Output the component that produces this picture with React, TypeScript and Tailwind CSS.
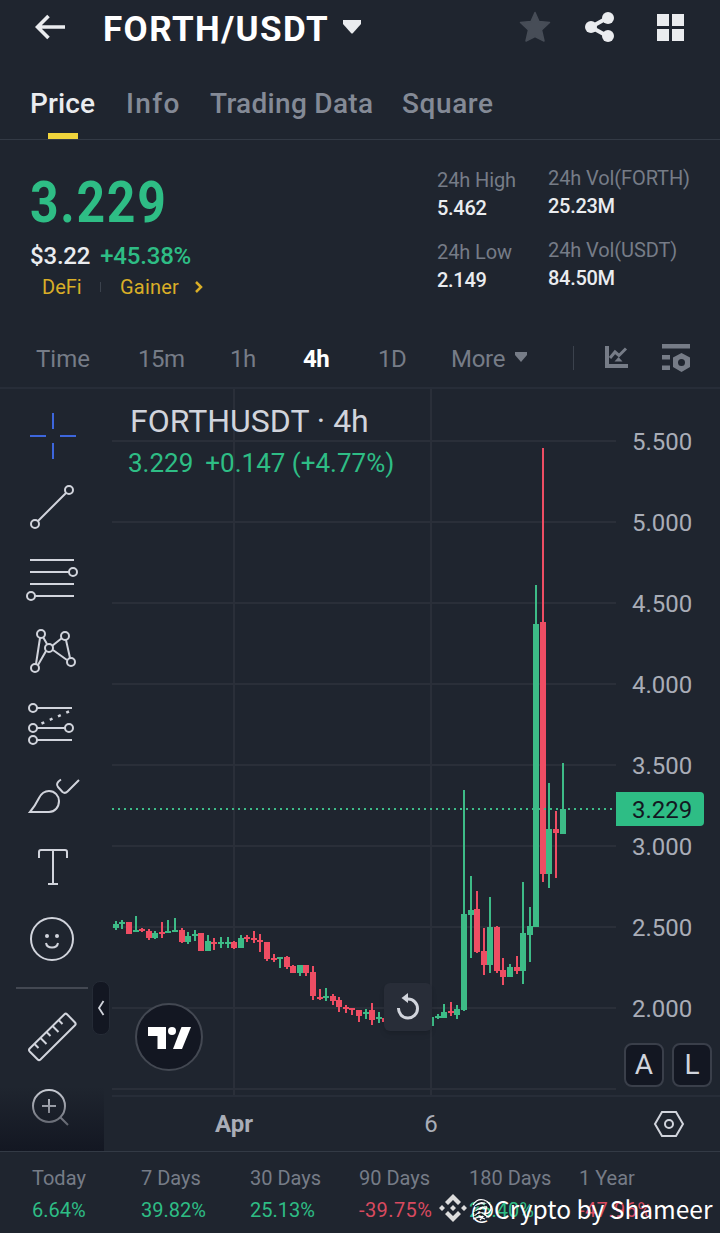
import type { ReactNode } from 'react';

type Candle = [x: number, high: number, top: number, bottom: number, low: number, up: 0 | 1];

// pixel positions inside the plot, shifted by the pane origin when drawn
const candles: Candle[] = [
  [116, 921, 924, 928, 930, 1], [122, 920, 922, 924, 929, 1], [129, 922, 922, 934, 934, 0],
  [136, 916, 930, 932, 932, 1], [142, 928, 929, 931, 932, 0], [149, 929, 931, 938, 940, 0],
  [155, 931, 933, 938, 939, 1], [162, 922, 932, 934, 938, 0], [168, 920, 931, 933, 933, 1],
  [175, 918, 930, 932, 932, 1], [182, 928, 930, 942, 943, 0], [188, 932, 936, 942, 944, 1],
  [195, 930, 934, 936, 941, 1], [201, 933, 933, 951, 951, 0], [208, 935, 941, 951, 951, 1],
  [214, 938, 942, 944, 950, 0], [221, 937, 942, 944, 948, 1], [228, 937, 942, 944, 948, 1],
  [234, 941, 942, 948, 949, 0], [241, 935, 938, 948, 948, 1], [247, 935, 937, 939, 942, 0],
  [254, 931, 938, 940, 943, 0], [260, 934, 940, 942, 952, 0], [267, 942, 942, 959, 961, 0],
  [274, 954, 958, 960, 962, 0], [280, 957, 957, 959, 968, 1], [287, 956, 957, 967, 969, 0],
  [293, 965, 966, 973, 973, 0], [300, 965, 965, 973, 976, 1], [306, 965, 965, 973, 976, 0],
  [313, 966, 972, 996, 1000, 0], [320, 989, 997, 999, 1000, 0], [326, 988, 996, 998, 1001, 1],
  [333, 994, 996, 1001, 1005, 0], [339, 997, 1000, 1007, 1012, 0], [346, 1005, 1007, 1009, 1013, 0],
  [352, 1008, 1008, 1010, 1015, 0], [359, 1010, 1010, 1016, 1022, 0], [366, 1009, 1012, 1014, 1019, 1],
  [372, 1003, 1010, 1020, 1025, 0], [379, 1012, 1017, 1019, 1023, 1], [385, 1018, 1018, 1022, 1022, 0],
  [431, 1014, 1017, 1026, 1026, 1], [438, 1014, 1016, 1018, 1019, 1], [444, 1004, 1012, 1018, 1018, 1],
  [451, 1002, 1011, 1013, 1016, 0], [457, 1005, 1009, 1015, 1019, 1], [464, 790, 914, 1010, 1011, 1],
  [471, 876, 910, 915, 958, 1], [477, 891, 909, 952, 953, 0], [484, 928, 951, 965, 975, 0],
  [490, 897, 927, 965, 973, 1], [497, 926, 927, 971, 973, 0], [503, 958, 970, 977, 985, 0],
  [510, 964, 967, 977, 977, 1], [517, 956, 967, 971, 974, 0], [523, 882, 933, 971, 984, 1],
  [530, 907, 926, 935, 962, 1], [536, 585, 624, 927, 927, 1], [543, 448, 622, 874, 882, 0],
  [549, 783, 829, 874, 888, 1], [556, 811, 829, 833, 878, 0], [563, 763, 809, 834, 834, 1],
];

const gridRows = [441, 522, 603, 684, 765, 846, 927, 1008, 1089];
const prices = ['5.500', '5.000', '4.500', '4.000', '3.500', '3.000', '2.500', '2.000'];

const returns = [
  { label: 'Today', value: '6.64%', up: true },
  { label: '7 Days', value: '39.82%', up: true },
  { label: '30 Days', value: '25.13%', up: true },
  { label: '90 Days', value: '-39.75%', up: false },
  { label: '180 Days', value: '25.40%', up: true },
  { label: '1 Year', value: '-47.96%', up: false },
];

function Header() {
  return (
    <header className="flex h-14 items-center pl-[35px]">
      <svg className="h-8 w-[31px]" viewBox="0 0 31 32" fill="none" stroke="#eaecef" strokeWidth="3.6">
        <path d="M30 15H3M13.500 4L2.500 15L13.500 26" />
      </svg>
      <h1 className="ml-[37px] w-[239px] pt-[2px] text-[35px] font-bold leading-none tracking-[1.4px] text-white">FORTH/USDT</h1>
      <svg className="mb-[3px] h-[14px] w-5" viewBox="0 0 20 14" fill="#eaecef">
        <path d="M1 0H19V4L11 13Q10 14 9 13L1 4Z" />
      </svg>
      <svg className="mb-[2px] ml-[157px] h-8 w-8" viewBox="0 0 32 32" fill="#474d57" stroke="#474d57" strokeWidth="1.500" strokeLinejoin="round">
        <path d="M16 1.500L20 10.500L30.500 11.500L22.500 19L25 30L16 25.500L7 30L9.500 19L1.500 11.500L12 10.500Z" />
      </svg>
      <svg className="mb-[2px] ml-[33px] h-8 w-8" viewBox="0 0 32 32" fill="#eaecef">
        <path d="M24 6.500L7 16L24 25.500" fill="none" stroke="#eaecef" strokeWidth="4" />
        <circle cx="24" cy="7" r="6" />
        <circle cx="7" cy="16" r="6" />
        <circle cx="24" cy="25" r="6" />
      </svg>
      <div className="mb-[2px] ml-[41px] grid grid-cols-2 gap-[3px]">
        <i className="size-3 bg-[#eaecef]" />
        <i className="size-3 bg-[#eaecef]" />
        <i className="size-3 bg-[#eaecef]" />
        <i className="size-3 bg-[#eaecef]" />
      </div>
    </header>
  );
}

function Tabs() {
  return (
    <nav className="flex h-[84px] border-b border-[#333a45] pl-[30px] pt-[31px] text-[28px] font-medium leading-[34px] text-[#848a96]">
      <div className="flex w-24 flex-col text-[#eaecef]">
        <span className="tracking-[0.1px]">Price</span>
        <i className="ml-[18px] mt-[12px] h-[6px] w-[30px] bg-[#f0d43c]" />
      </div>
      <span className="w-[84px] tracking-[1.4px]">Info</span>
      <span className="w-48 tracking-[0.3px]">Trading Data</span>
      <span className="tracking-[0.6px]">Square</span>
    </nav>
  );
}

function Stat({ label, value }: { label: string; value: string }) {
  return (
    <div className="h-[72px] whitespace-nowrap text-xl leading-7">
      <div className="tracking-[-0.1px] text-[#767c87]">{label}</div>
      <div className="font-medium tracking-[-0.3px] text-[#eaecef]">{value}</div>
    </div>
  );
}

function Summary() {
  return (
    <section className="flex h-[189px]">
      <div className="w-[437px] pl-[30px] pt-[33px]">
        <div className="h-[68px] origin-left scale-x-[0.86] text-[58px] font-bold leading-[58px] tracking-[2px] text-[#2ebd85]">3.229</div>
        <div className="flex h-[30px] gap-[10px] text-2xl font-medium leading-[30px] tracking-[-0.2px]">
          <span className="text-[#eaecef]">$3.22</span>
          <span className="text-[#2ebd85]">+45.38%</span>
        </div>
        <div className="flex h-8 items-center pl-3 text-xl text-[#d9ae27]">
          <span className="w-[58px]">DeFi</span>
          <i className="h-[10px] w-px bg-[#3b424d]" />
          <span className="ml-[19px] w-[75px] tracking-[0.2px]">Gainer</span>
          <svg className="h-3 w-2" viewBox="0 0 8 12" fill="none" stroke="currentColor" strokeWidth="2.500">
            <path d="M1 1L6 6L1 11" />
          </svg>
        </div>
      </div>
      <div className="w-[111px] pt-[26px]">
        <Stat label="24h High" value="5.462" />
        <Stat label="24h Low" value="2.149" />
      </div>
      <div className="pt-6">
        <Stat label="24h Vol(FORTH)" value="25.23M" />
        <Stat label="24h Vol(USDT)" value="84.50M" />
      </div>
    </section>
  );
}

function Intervals() {
  return (
    <div className="flex h-[60px] items-center border-b-2 border-[#272d38] pl-9 text-2xl text-[#767c87]">
      <span className="w-[102px] pt-[2px]">Time</span>
      <span className="w-[92px] pt-[2px] tracking-[-0.5px]">15m</span>
      <span className="w-[73px] pt-[2px] tracking-[-0.5px]">1h</span>
      <span className="w-[75px] pt-[2px] font-bold tracking-[-0.5px] text-white">4h</span>
      <span className="w-[73px] pt-[2px] tracking-[-0.5px]">1D</span>
      <span className="w-[64px] pt-[2px] tracking-[-0.3px]">More</span>
      <svg className="mb-[2px] h-[10px] w-3" viewBox="0 0 12 10" fill="#767c87">
        <path d="M0 0H12V3L6 10L0 3Z" />
      </svg>
      <i className="ml-[46px] h-6 w-px bg-[#3b424d]" />
      <svg className="mb-[2px] ml-[31px] h-6 w-6" viewBox="0 0 24 24" fill="none" stroke="#767c87" strokeWidth="3">
        <path d="M2 1V21H23" strokeWidth="4" />
        <path d="M5 13L10 7L14 10.500L21 3.500" />
        <path d="M9.500 16.500L13.500 12L17.500 16.500Z" fill="#767c87" stroke="none" />
      </svg>
      <svg className="ml-[33px] h-7 w-7" viewBox="0 0 28 28" fill="#767c87">
        <path d="M0 0H28V4.500H0ZM0 11H8V15.500H0ZM0 21.500H8V26H0Z" />
        <path fillRule="evenodd" d="M19.500 9L28 13.500V23L19.500 28L11 23V13.500ZM19.500 15A3.500 3.500 0 1 0 19.500 22A3.500 3.500 0 1 0 19.500 15Z" />
      </svg>
    </div>
  );
}

function Tool({ children }: { children: ReactNode }) {
  return (
    <svg className="block h-[72px] w-[104px]" viewBox="0 0 104 72" fill="none" stroke="#d1d4dc" strokeWidth="2">
      {children}
    </svg>
  );
}

function Toolbar() {
  return (
    <aside className="relative h-[762px] w-28 shrink-0 pt-[11px]">
      <Tool>
        <path stroke="#3d66dc" d="M53 13V29M53 43V59M30 36H46M60 36H76" />
      </Tool>
      <Tool>
        <path d="M38 49L66 21" />
        <circle cx="69" cy="18" r="4" />
        <circle cx="35" cy="52" r="4" />
      </Tool>
      <Tool>
        <path d="M30 16H74M30 28H69M30 40H74M35 52H74" />
        <circle cx="73" cy="28" r="4" />
        <circle cx="31" cy="52" r="4" />
      </Tool>
      <Tool>
        <path d="M36 48L40 22M43 21L47 28M38 49L46 35M52 30L62 22M53 34L67 44M66 24L70 42" />
        <circle cx="41" cy="18" r="4" />
        <circle cx="65" cy="20" r="4" />
        <circle cx="49" cy="32" r="4" />
        <circle cx="71" cy="46" r="4" />
        <circle cx="35" cy="52" r="4" />
      </Tool>
      <Tool>
        <path d="M37 20H72M37 40H65M37 52H72" />
        <path strokeWidth="2.500" strokeDasharray="3 6" d="M41.500 35.500L69 23.500" />
        <circle cx="33" cy="20" r="4" />
        <circle cx="33" cy="40" r="4" />
        <circle cx="69" cy="40" r="4" />
        <circle cx="33" cy="52" r="4" />
      </Tool>
      <Tool>
        <path d="M30 52C35 46 37 42 39 38C42 32 45 31 49 31C55 31 59 36 59 41C59 47 55 52 49 52Z" />
        <path d="M61 19.500C57 22 56 25 58 27L62.500 32Q65 34 67.500 31.500L79 20" />
      </Tool>
      <Tool>
        <path d="M39 26V20Q39 18 41 18H65Q67 18 67 20V26M53 18V52M48 52H58" />
      </Tool>
      <Tool>
        <circle cx="52" cy="35" r="21" />
        <circle cx="47" cy="32" r="2" fill="#d1d4dc" stroke="none" />
        <circle cx="57" cy="32" r="2" fill="#d1d4dc" stroke="none" />
        <path d="M46 39C47 45 57 45 58 39" />
      </Tool>
      <div className="ml-4 mt-[11px] h-[2px] w-[72px] bg-[#434852]" />
      <div className="pt-[11px]">
        <Tool>
          <path d="M64.500 14.200Q65.700 13 67 14.200L75 22.500Q76.300 24 75 25.200L40.500 59.500Q39 60.800 37.700 59.500L29.700 51.500Q28.300 50 29.700 48.500Z" />
          <path d="M34.500 44L38.500 48M40.500 38L46.500 44M46.500 32L50.500 36M52.500 26L58.500 32M58.500 20L62.500 24" />
        </Tool>
        <Tool>
          <circle cx="49" cy="34" r="16" />
          <path d="M42 34H56M49 27V41M60.500 45.500L68 53" />
        </Tool>
      </div>
      <div className="absolute bottom-0 left-0 h-[64px] w-[104px] bg-linear-to-b from-[#131722]/0 to-[#131722]" />
      <div className="absolute left-[92px] top-[592px] flex h-[54px] w-[18px] items-center justify-center rounded-[8px] border border-[#252b36] bg-[#131722]">
        <svg className="mr-px h-4 w-2" viewBox="0 0 8 16" fill="none" stroke="#d1d4dc" strokeWidth="1.800">
          <path d="M6.500 1L2 8L6.500 15" />
        </svg>
      </div>
    </aside>
  );
}

function Plot() {
  return (
    <svg className="block h-[706px] w-[504px]" viewBox="112 389 504 706">
      <g fill="#2a2f39">
        {gridRows.map((y) => (
          <rect key={y} x="112" y={y - 1} width="504" height="2" />
        ))}
        <rect x="233" y="389" width="2" height="706" />
        <rect x="430" y="389" width="2" height="706" />
      </g>
      {candles.map(([x, high, top, bottom, low, up]) => (
        <g key={x} fill={up ? '#3dbb87' : '#ee4d63'}>
          <rect x={x - 1} y={high} width="2" height={low - high} />
          <rect x={x - 3} y={top} width="6" height={bottom - top} />
        </g>
      ))}
      <path d="M112 809H616" stroke="#3dbb87" strokeWidth="2" strokeDasharray="2 4" />
    </svg>
  );
}

function Chart() {
  return (
    <section className="flex h-[763px] border-b border-[#333a45]">
      <Toolbar />
      <div className="relative flex w-[608px] flex-col">
        <div className="flex h-[706px]">
          <Plot />
          <div className="flex flex-col pl-4 pt-3 text-2xl text-[#a9adb7]">
            {prices.map((p) => (
              <span key={p} className="flex h-[81px] items-center pt-px">{p}</span>
            ))}
          </div>
        </div>
        <div className="flex h-[56px] items-center border-t-2 border-[#272d38] pb-px text-2xl text-[#a9adb7]">
          <span className="ml-[84px] w-[76px] text-center font-bold">Apr</span>
          <span className="ml-[139px] w-10 text-center">6</span>
          <svg className="ml-[202px] h-7 w-8" viewBox="0 0 32 28" fill="none" stroke="#d1d4dc" strokeWidth="2">
            <path d="M9 2H23L30 14L23 26H9L2 14Z" />
            <circle cx="16" cy="14" r="4" />
          </svg>
        </div>

        <div className="absolute left-[18px] top-[14px] whitespace-nowrap text-[30px] leading-9 tracking-[1.1px] text-[#d1d4dc]">
          <span className="text-[32px] tracking-normal">FORTHUSDT · 4h</span>
        </div>
        <div className="absolute left-4 top-[58px] flex gap-3 whitespace-nowrap text-[26px] leading-8 text-[#2ebd85]">
          <span>3.229</span>
          <span>+0.147 (+4.77%)</span>
        </div>
        <div className="absolute left-[504px] top-[403px] flex h-[34px] w-[88px] items-center rounded-r-[4px] bg-[#2ebd85] pl-4 pt-px text-2xl text-[#131722]">3.229</div>
        <svg className="absolute left-[23px] top-[614px] size-[68px]" viewBox="0 0 68 68">
          <circle cx="34" cy="34" r="33" fill="#131722" stroke="#434852" strokeWidth="2" />
          <g fill="#fff">
            <path d="M13 24H31V46H22.500V33H13Z" />
            <circle cx="37" cy="28" r="4" />
            <path d="M46.500 24H56L47 46H38Z" />
          </g>
        </svg>
        <div className="absolute left-[272px] top-[594px] flex size-12 items-center justify-center rounded-md bg-[#282d38] shadow-md">
          <svg className="size-7" viewBox="0 0 28 28" fill="none" stroke="#d1d4dc" strokeWidth="3">
            <path d="M4.500 15A9.500 9.500 0 1 0 14 6H11" />
            <path d="M14 0L7.500 5L14 10Z" fill="#d1d4dc" stroke="none" />
          </svg>
        </div>
        <div className="absolute left-[512px] top-[654px] flex gap-2 text-[28px] text-[#d1d4dc]">
          <span className="flex h-11 w-10 items-center justify-center rounded-lg border-2 border-[#3a3f4a] bg-[#131722]">A</span>
          <span className="flex h-11 w-10 items-center justify-center rounded-lg border-2 border-[#3a3f4a] bg-[#131722]">L</span>
        </div>
      </div>
    </section>
  );
}

function Returns() {
  return (
    <footer className="relative h-[81px] pl-8 pt-[10px]">
      <div className="grid grid-cols-[109px_109px_109px_110px_110px_110px] whitespace-nowrap text-xl leading-8">
        {returns.map((r) => (
          <div key={r.label}>
            <div className="text-[#767c87]">{r.label}</div>
            <div className={r.up ? 'text-[#2ebd85]' : 'tracking-[0.4px] text-[#d84a5f]'}>{r.value}</div>
          </div>
        ))}
      </div>
      <div className="absolute left-[439px] top-[41px] flex items-center whitespace-nowrap font-['Noto_Sans_CJK_SC','Noto_Sans',sans-serif] text-[24.5px] leading-8 text-white">
        <svg className="mb-[2px] mr-[4px] h-7 w-7" viewBox="0 0 28 28" fill="#dcdcdc">
          <path d="M14 0L22 8L19 11L14 6L9 11L6 8Z" />
          <path d="M14 28L22 20L19 17L14 22L9 17L6 20Z" />
          <path d="M14 11L17 14L14 17L11 14ZM3 11L6 14L3 17L0 14ZM25 11L28 14L25 17L22 14Z" />
        </svg>
        <span className="relative w-[23px]">
          @
          <svg className="absolute left-0 top-[5px] h-[23px] w-[21px]" viewBox="0 0 21 23" fill="none" strokeWidth="1.300">
            <path stroke="#fff" d="M2 7Q6 0 13 2Q20 4 20 11Q18 17 12 15Q6 14 4 18M3 11Q8 4 14 6M5 13Q10 8 16 9M2 21L8 19L14 21M9 22L13 17L18 19" />
            <path stroke="#11151b" d="M4 6Q9 2 14 4Q18 6 18 10M4 9Q9 6 13 8M3 15Q8 11 12 13M6 17L10 16L15 19M3 19L7 17" />
          </svg>
        </span>
        <span>Crypto by Shameer</span>
      </div>
    </footer>
  );
}

export default function App() {
  return (
    <main className="h-[1233px] w-[720px] overflow-hidden bg-[#1f252f] font-[Roboto,sans-serif]">
      <Header />
      <Tabs />
      <Summary />
      <Intervals />
      <Chart />
      <Returns />
    </main>
  );
}
